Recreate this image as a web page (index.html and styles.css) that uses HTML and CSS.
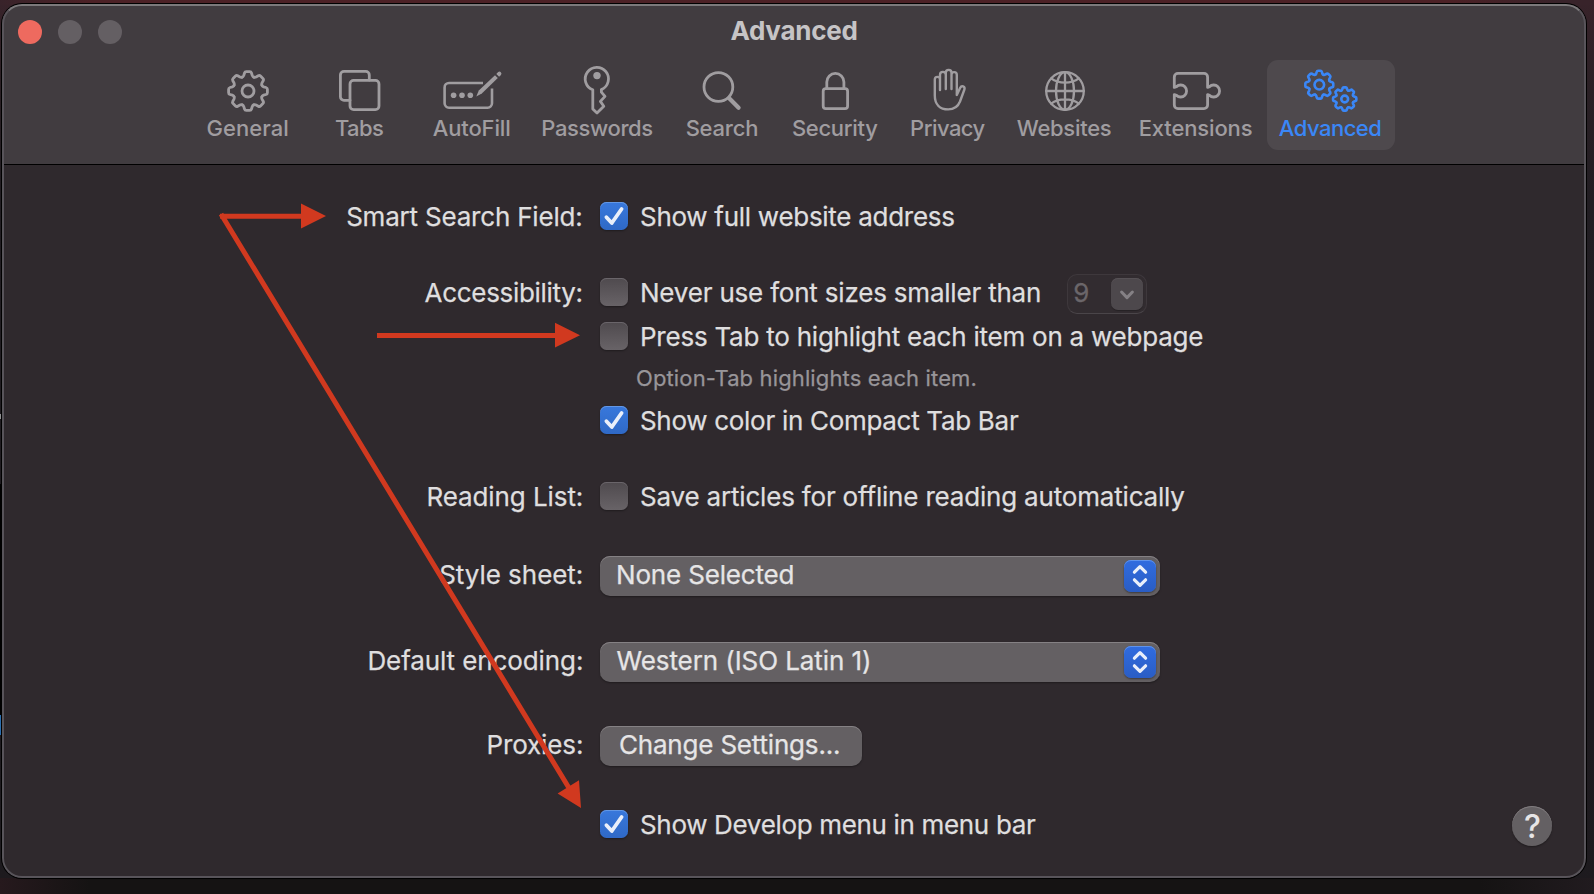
FILE: index.html
```
<!DOCTYPE html>
<html lang="en">
<head>
<meta charset="utf-8">
<title>Advanced</title>
<link rel="stylesheet" href="styles.css">
</head>
<body>
<svg class="defs" width="0" height="0" aria-hidden="true">
  <defs>
    <path id="tooth" d="M-5.76-13.9Q-4.6-14.4-4.2-15.6L-3.5-18Q-3.1-19.4-1.7-19.4H1.7Q3.1-19.4 3.5-18L4.2-15.6Q4.6-14.4 5.76-13.9" vector-effect="non-scaling-stroke"/>
    <g id="gear">
      <use href="#tooth"/>
      <use href="#tooth" transform="rotate(45)"/>
      <use href="#tooth" transform="rotate(90)"/>
      <use href="#tooth" transform="rotate(135)"/>
      <use href="#tooth" transform="rotate(180)"/>
      <use href="#tooth" transform="rotate(225)"/>
      <use href="#tooth" transform="rotate(270)"/>
      <use href="#tooth" transform="rotate(315)"/>
    </g>
  </defs>
</svg>

<div class="window">
  <header class="toolbar">
    <div class="titlebar">
      <div class="lights"><i class="light close"></i><i class="light"></i><i class="light"></i></div>
      <h1 class="title">Advanced</h1>
    </div>
    <nav class="tabs">
      <div class="tab general">
        <svg class="icon" viewBox="-32 -26 64 52"><use href="#gear"/><circle r="6"/></svg>
        <span>General</span>
      </div>
      <div class="tab tabs-tab">
        <svg class="icon" viewBox="-32 -26 64 52"><rect x="-10" y="-10.6" width="29" height="29.2" rx="3.6"/><path d="M9.3-11V-16a3.6 3.6 0 0 0-3.6-3.6H-16a3.6 3.6 0 0 0-3.6 3.6V5.7A3.6 3.6 0 0 0-16 9.3H-10"/></svg>
        <span>Tabs</span>
      </div>
      <div class="tab autofill">
        <svg class="icon" viewBox="-32 -26 64 52"><path class="butt" stroke-width="2.6" d="M11-8H-23a4.4 4.4 0 0 0-4.4 4.4V12.3A4.4 4.4 0 0 0-23 16.7H15.6A4.4 4.4 0 0 0 20 12.3V-2.6"/><g class="fill"><circle cx="-18.4" cy="4.3" r="2.8"/><circle cx="-10" cy="4.3" r="2.8"/><circle cx="-1.7" cy="4.3" r="2.8"/><path d="M4.3 5.5L6.8-.4 23-15.8 25.8-13 9.8 2.6Z"/><path d="M24.3-17L26.2-18.9A2 2 0 0 1 29-16.1L27.1-14.2Z"/></g></svg>
        <span>AutoFill</span>
      </div>
      <div class="tab passwords">
        <svg class="icon" viewBox="-32 -26 64 52"><path stroke-width="2.8" d="M-4.2-1.2A11.6 11.6 0 1 1 4.4-1.4V1.2L8 5.4 3.4 10.4 6.8 15.2 0 22 -4.2 18Z"/><circle class="fill" cy="-15.4" r="3.7"/></svg>
        <span>Passwords</span>
      </div>
      <div class="tab search">
        <svg class="icon" viewBox="-32 -26 64 52"><circle cx="-3.6" cy="-4" r="14.4"/><path stroke-width="4.2" d="M7.2 7.2L16.6 16.8"/></svg>
        <span>Search</span>
      </div>
      <div class="tab security">
        <svg class="icon" viewBox="-31.5 -26 64 52"><rect x="-12.3" y="-2.3" width="24.4" height="20" rx="2.6"/><path d="M-8.7-2.5V-9a8.55 8.55 0 0 1 17.1 0V-2.5"/></svg>
        <span>Security</span>
      </div>
      <div class="tab privacy">
        <svg class="icon" viewBox="-32 -26 64 52"><path stroke-width="2.4" d="M-8-1V-11.5a2.6 2.6 0 0 0-5.2 0V4.5C-13.2 13.5-8 18.4 .2 18.4 6.5 18.4 10 15.5 12 10.5L16.4-1.5C17.3-4.7 13.6-6 12.2-3.2L8.8 4V-16.2a2.65 2.65 0 0 0-5.3 0V-2M3.5-2V-18.3a2.85 2.85 0 0 0-5.7 0V-2M-2.2-2V-16.2a2.9 2.9 0 0 0-5.8 0V-1"/></svg>
        <span>Privacy</span>
      </div>
      <div class="tab websites">
        <svg class="icon" viewBox="-32 -26 64 52"><g stroke-width="2.3"><circle r="18.8"/><ellipse rx="9" ry="18.8"/><path d="M0-18.8V18.8M-18.8 0H18.8M-13.8-12.6Q-8.4-8.4 0-8.4T13.8-12.6M-13.8 12.6Q-8.4 8.4 0 8.4T13.8 12.6"/></g></svg>
        <span>Websites</span>
      </div>
      <div class="tab extensions">
        <svg class="icon" viewBox="-32 -26 64 52"><path d="M-21.7-3.6V-14a3.6 3.6 0 0 1 3.6-3.6H8A3.6 3.6 0 0 1 11.6-14V-3.6L13.5-4.4A6 6 0 1 1 13.5 4.4L11.6 3.6V14A3.6 3.6 0 0 1 8 17.6H-18.1A3.6 3.6 0 0 1-21.7 14V3.6L-19.5 4.4A6 6 0 1 0-19.5-4.4Z"/></svg>
        <span>Extensions</span>
      </div>
      <div class="tab advanced selected">
        <svg class="icon" viewBox="-32 -26 64 52"><g stroke-width="2.6"><g transform="translate(-11.7 -6.3)"><use href="#gear" transform="scale(.72)"/><circle r="4.8"/></g><g transform="translate(13.7 8)"><use href="#gear" transform="scale(.6)"/><circle r="3.4"/></g></g></svg>
        <span>Advanced</span>
      </div>
    </nav>
  </header>

  <main class="form">
    <div class="row r-smart">
      <span class="label l-smart">Smart Search Field:</span>
      <div class="control"><i class="check on"><svg viewBox="0 0 28 28"><path d="M6.4 15.2L11.8 21 21.6 7"/></svg></i><span class="text c-full">Show full website address</span></div>
    </div>
    <div class="row r-access">
      <span class="label l-access">Accessibility:</span>
      <div class="control"><i class="check"></i><span class="text c-never">Never use font sizes smaller than</span>
        <div class="combo"><span>9</span><i class="combo-btn"><svg viewBox="0 0 32 32"><path d="M10.6 14L16 19.6 21.4 14"/></svg></i></div>
      </div>
    </div>
    <div class="row r-press">
      <span class="label"></span>
      <div class="control"><i class="check"></i><span class="text c-press">Press Tab to highlight each item on a webpage</span></div>
    </div>
    <div class="row r-hint">
      <span class="label"></span>
      <div class="control"><span class="hint">Option-Tab highlights each item.</span></div>
    </div>
    <div class="row r-color">
      <span class="label"></span>
      <div class="control"><i class="check on"><svg viewBox="0 0 28 28"><path d="M6.4 15.2L11.8 21 21.6 7"/></svg></i><span class="text c-color">Show color in Compact Tab Bar</span></div>
    </div>
    <div class="row r-list">
      <span class="label l-list">Reading List:</span>
      <div class="control"><i class="check"></i><span class="text c-save">Save articles for offline reading automatically</span></div>
    </div>
    <div class="row r-style">
      <span class="label l-style">Style sheet:</span>
      <div class="popup"><span class="v-none">None Selected</span><i class="stepper"><svg viewBox="0 0 32 32"><path d="M10.4 12.2L16 6.6 21.6 12.2M10.4 19.8L16 25.4 21.6 19.8"/></svg></i></div>
    </div>
    <div class="row r-enc">
      <span class="label l-enc">Default encoding:</span>
      <div class="popup"><span class="v-west">Western (ISO Latin 1)</span><i class="stepper"><svg viewBox="0 0 32 32"><path d="M10.4 12.2L16 6.6 21.6 12.2M10.4 19.8L16 25.4 21.6 19.8"/></svg></i></div>
    </div>
    <div class="row r-proxy">
      <span class="label l-proxy">Proxies:</span>
      <div class="button">Change Settings...</div>
    </div>
    <div class="row r-develop">
      <span class="label"></span>
      <div class="control"><i class="check on"><svg viewBox="0 0 28 28"><path d="M6.4 15.2L11.8 21 21.6 7"/></svg></i><span class="text c-develop">Show Develop menu in menu bar</span><span class="help">?</span></div>
    </div>
  </main>
</div>

<i class="edge light-edge"></i><i class="edge dark-edge"></i><i class="edge blue-edge"></i>

<svg class="arrows" viewBox="0 0 1594 894">
  <path class="shaft" d="M220 216.3H302M377 335.5H556M221 214L569 788"/>
  <path class="head" d="M301 203.5L326 216 301 228.5ZM555 322.8L580 335.3 555 347.6ZM557.6 793.4L579 780.3 581 808Z"/>
</svg>
</body>
</html>
```
FILE: styles.css
```
* { box-sizing: border-box; }

body {
  margin: 0;
  width: 1594px;
  height: 894px;
  overflow: hidden;
  position: relative;
  padding: 4px 8px 16px 2px;
  font-family: Inter, "Liberation Sans", sans-serif;
  color: #dfdedf;
  background:
    linear-gradient(90deg, #26191d 0, #151313 90px, #151313 1480px, #211b1f 1594px) 0 878px / 100% 16px no-repeat,
    linear-gradient(90deg, #38232a 0, #4c2126 90px, #4c2126 1450px, #38232a 1560px) 0 0 / 100% 5px no-repeat,
    linear-gradient(#38232a 0, #2a2025 90px, #211d22 200px, #1d1a1e 894px);
}

.defs, .arrows, .edge { position: absolute; }

.window {
  height: 874px;
  border-radius: 20px;
  background: #2f292d;
  box-shadow: 0 0 0 1px #000;
  overflow: hidden;
  position: relative;
}

.window::after {
  content: "";
  position: absolute;
  inset: 0;
  border: 2px solid #58545a;
  border-top-color: #7c797b;
  border-radius: 20px;
}

.toolbar {
  height: 161px;
  background: #413c40;
  border-bottom: 1px solid #000;
}

.titlebar {
  height: 56px;
  display: grid;
  grid-template-columns: 1fr auto 1fr;
}

.lights {
  display: flex;
  gap: 16px;
  padding: 16px 0 0 16px;
}

.light {
  width: 24px;
  height: 24px;
  border-radius: 50%;
  background: #645f63;
}

.light.close { background: #ee6a5f; }

.title {
  margin: 0;
  padding-top: 11px;
  font-size: 26px;
  line-height: 32px;
  font-weight: 700;
  letter-spacing: -0.27px;
  color: #c6c4c6;
}

.tabs {
  display: flex;
  height: 90px;
  padding-left: 187.7px;
}

.tab {
  display: flex;
  flex: none;
  flex-direction: column;
  align-items: center;
  padding-top: 5px;
  border-radius: 11px;
  color: #a09da0;
  font-size: 22px;
  line-height: 26px;
  font-weight: 500;
  white-space: nowrap;
}

.tab span { margin-top: -2px; }

.icon {
  flex: none;
  width: 64px;
  height: 52px;
  fill: none;
  stroke: currentColor;
  stroke-width: 2.8px;
  stroke-linecap: round;
  stroke-linejoin: round;
  overflow: visible;
}

.icon .fill { fill: currentColor; stroke: none; }
.icon .butt { stroke-linecap: butt; }

.general { width: 116px; letter-spacing: 0.06px; }
.tabs-tab { width: 108.7px; letter-spacing: -0.6px; }
.autofill { width: 114.7px; letter-spacing: -0.13px; }
.passwords { width: 136px; letter-spacing: -0.38px; }
.search { width: 114.7px; letter-spacing: -0.22px; }
.security { width: 112px; letter-spacing: -0.29px; }
.privacy { width: 113.3px; letter-spacing: -0.53px; }
.websites { width: 120px; letter-spacing: -0.29px; }
.extensions { width: 142px; letter-spacing: -0.14px; }
.advanced { width: 128px; letter-spacing: -0.5px; }

.tabs-tab span, .security span, .privacy span, .websites span, .advanced span { margin-right: 2px; }
.search span, .extensions span { margin-right: 1px; }

.tab.selected {
  background: #4e494d;
  color: #3a87f7;
}

.form {
  padding-top: 37px;
  font-size: 26px;
  line-height: 28px;
  letter-spacing: -0.2px;
  white-space: nowrap;
  -webkit-text-stroke: 0.25px currentColor;
}

.row {
  display: grid;
  grid-template-columns: 581.3px 1fr;
  column-gap: 16.7px;
  height: 28px;
}

.label { text-align: right; }
.control { display: flex; }
.text { margin-left: 12px; }

.r-smart, .r-access, .r-press, .r-color, .r-list, .r-develop { line-height: 30px; }

.r-access { margin-top: 48px; }
.r-press { margin-top: 16px; }
.r-hint { margin-top: 14px; }
.r-color { margin-top: 14px; }
.r-list { margin-top: 48px; }
.r-style { margin-top: 46px; height: 40px; line-height: 38px; }
.r-enc { margin-top: 46px; height: 40px; line-height: 38px; }
.r-proxy { margin-top: 44px; height: 40px; line-height: 38px; }
.r-develop { margin-top: 44px; }

.l-smart { padding-right: 0.8px; }
.l-access { letter-spacing: -0.31px; padding-right: 0.6px; }
.l-list { letter-spacing: -0.08px; }
.l-style { letter-spacing: -0.04px; }
.l-enc { letter-spacing: -0.1px; }
.l-proxy { letter-spacing: -0.12px; }
.c-full { letter-spacing: -0.28px; }
.c-never { letter-spacing: -0.2px; }
.c-press { letter-spacing: -0.235px; }
.c-color { letter-spacing: -0.3px; }
.c-save { letter-spacing: -0.185px; }
.c-develop { letter-spacing: -0.33px; }

.check {
  flex: none;
  width: 28px;
  height: 28px;
  border-radius: 6.5px;
  background: linear-gradient(#4f4a4e, #686367);
  box-shadow: inset 0 1px 0 #6a656a, 0 1px 2px rgba(0, 0, 0, .35);
}

.check.on {
  background: linear-gradient(#3878dc, #2f69c6);
  box-shadow: inset 0 1px 0 #6397e4, 0 1px 2px rgba(0, 0, 0, .35);
}

.check svg, .combo-btn svg, .stepper svg {
  display: block;
  width: 100%;
  height: 100%;
  fill: none;
  stroke: #e9effa;
  stroke-width: 3.8px;
  stroke-linecap: round;
  stroke-linejoin: round;
}

.hint {
  margin-left: 36px;
  font-size: 22px;
  letter-spacing: 0.131px;
  color: #989599;
}

.combo {
  display: flex;
  justify-content: space-between;
  width: 80px;
  height: 40px;
  margin: -4px 0 0 26px;
  padding: 3px 3px 3px 5px;
  border: 1px solid #3e383c;
  border-bottom-color: #4a4549;
  border-radius: 10px;
  background: #322c30;
  color: #6b666a;
  line-height: 30px;
}

.combo-btn {
  width: 32px;
  height: 32px;
  border-radius: 7px;
  background: #4d484c;
  box-shadow: inset 0 1px 0 #565155, 0 1px 1px rgba(0, 0, 0, .25);
}

.combo-btn svg { stroke: #858185; stroke-width: 3px; }

.popup, .button {
  height: 40px;
  border-radius: 10px;
  background: #646063;
  color: #e6e5e6;
  box-shadow: inset 0 1px 0 #858184, 0 1px 2px rgba(0, 0, 0, .35);
}

.popup {
  display: flex;
  justify-content: space-between;
  width: 560px;
  padding: 0 4px 0 16px;
}

.v-none { letter-spacing: -0.17px; }
.v-west { letter-spacing: -0.083px; padding-left: 0.5px; }

.button {
  width: 262px;
  padding-left: 19px;
  letter-spacing: -0.192px;
}

.stepper {
  width: 32px;
  height: 32px;
  margin-top: 4px;
  border-radius: 7px;
  background: linear-gradient(#306ce0, #2a5dc4);
  box-shadow: inset 0 1px 0 #5f93ec, 0 1px 2px rgba(0, 0, 0, .4);
}

.stepper svg { stroke-width: 3.2px; }

.help {
  width: 40px;
  height: 40px;
  margin: -4px 34px 0 auto;
  padding-left: 1px;
  border-radius: 50%;
  background: #646063;
  box-shadow: inset 0 1px 0 #807c7f, 0 1px 2px rgba(0, 0, 0, .35);
  color: #e6e5e6;
  font-size: 32px;
  font-weight: 500;
  line-height: 41px;
  letter-spacing: 0;
  text-align: center;
  -webkit-text-stroke: 0;
}

.arrows {
  top: 0;
  left: 0;
  width: 1594px;
  height: 894px;
}

.shaft { fill: none; stroke: #d1391f; stroke-width: 5px; }
.head { fill: #d1391f; }

.edge { left: 0; width: 1px; }
.light-edge { top: 414px; height: 5px; background: #8f8f91; }
.dark-edge { top: 484px; height: 231px; background: #000; }
.blue-edge { top: 715px; height: 20px; background: #2b6fb0; }
```
